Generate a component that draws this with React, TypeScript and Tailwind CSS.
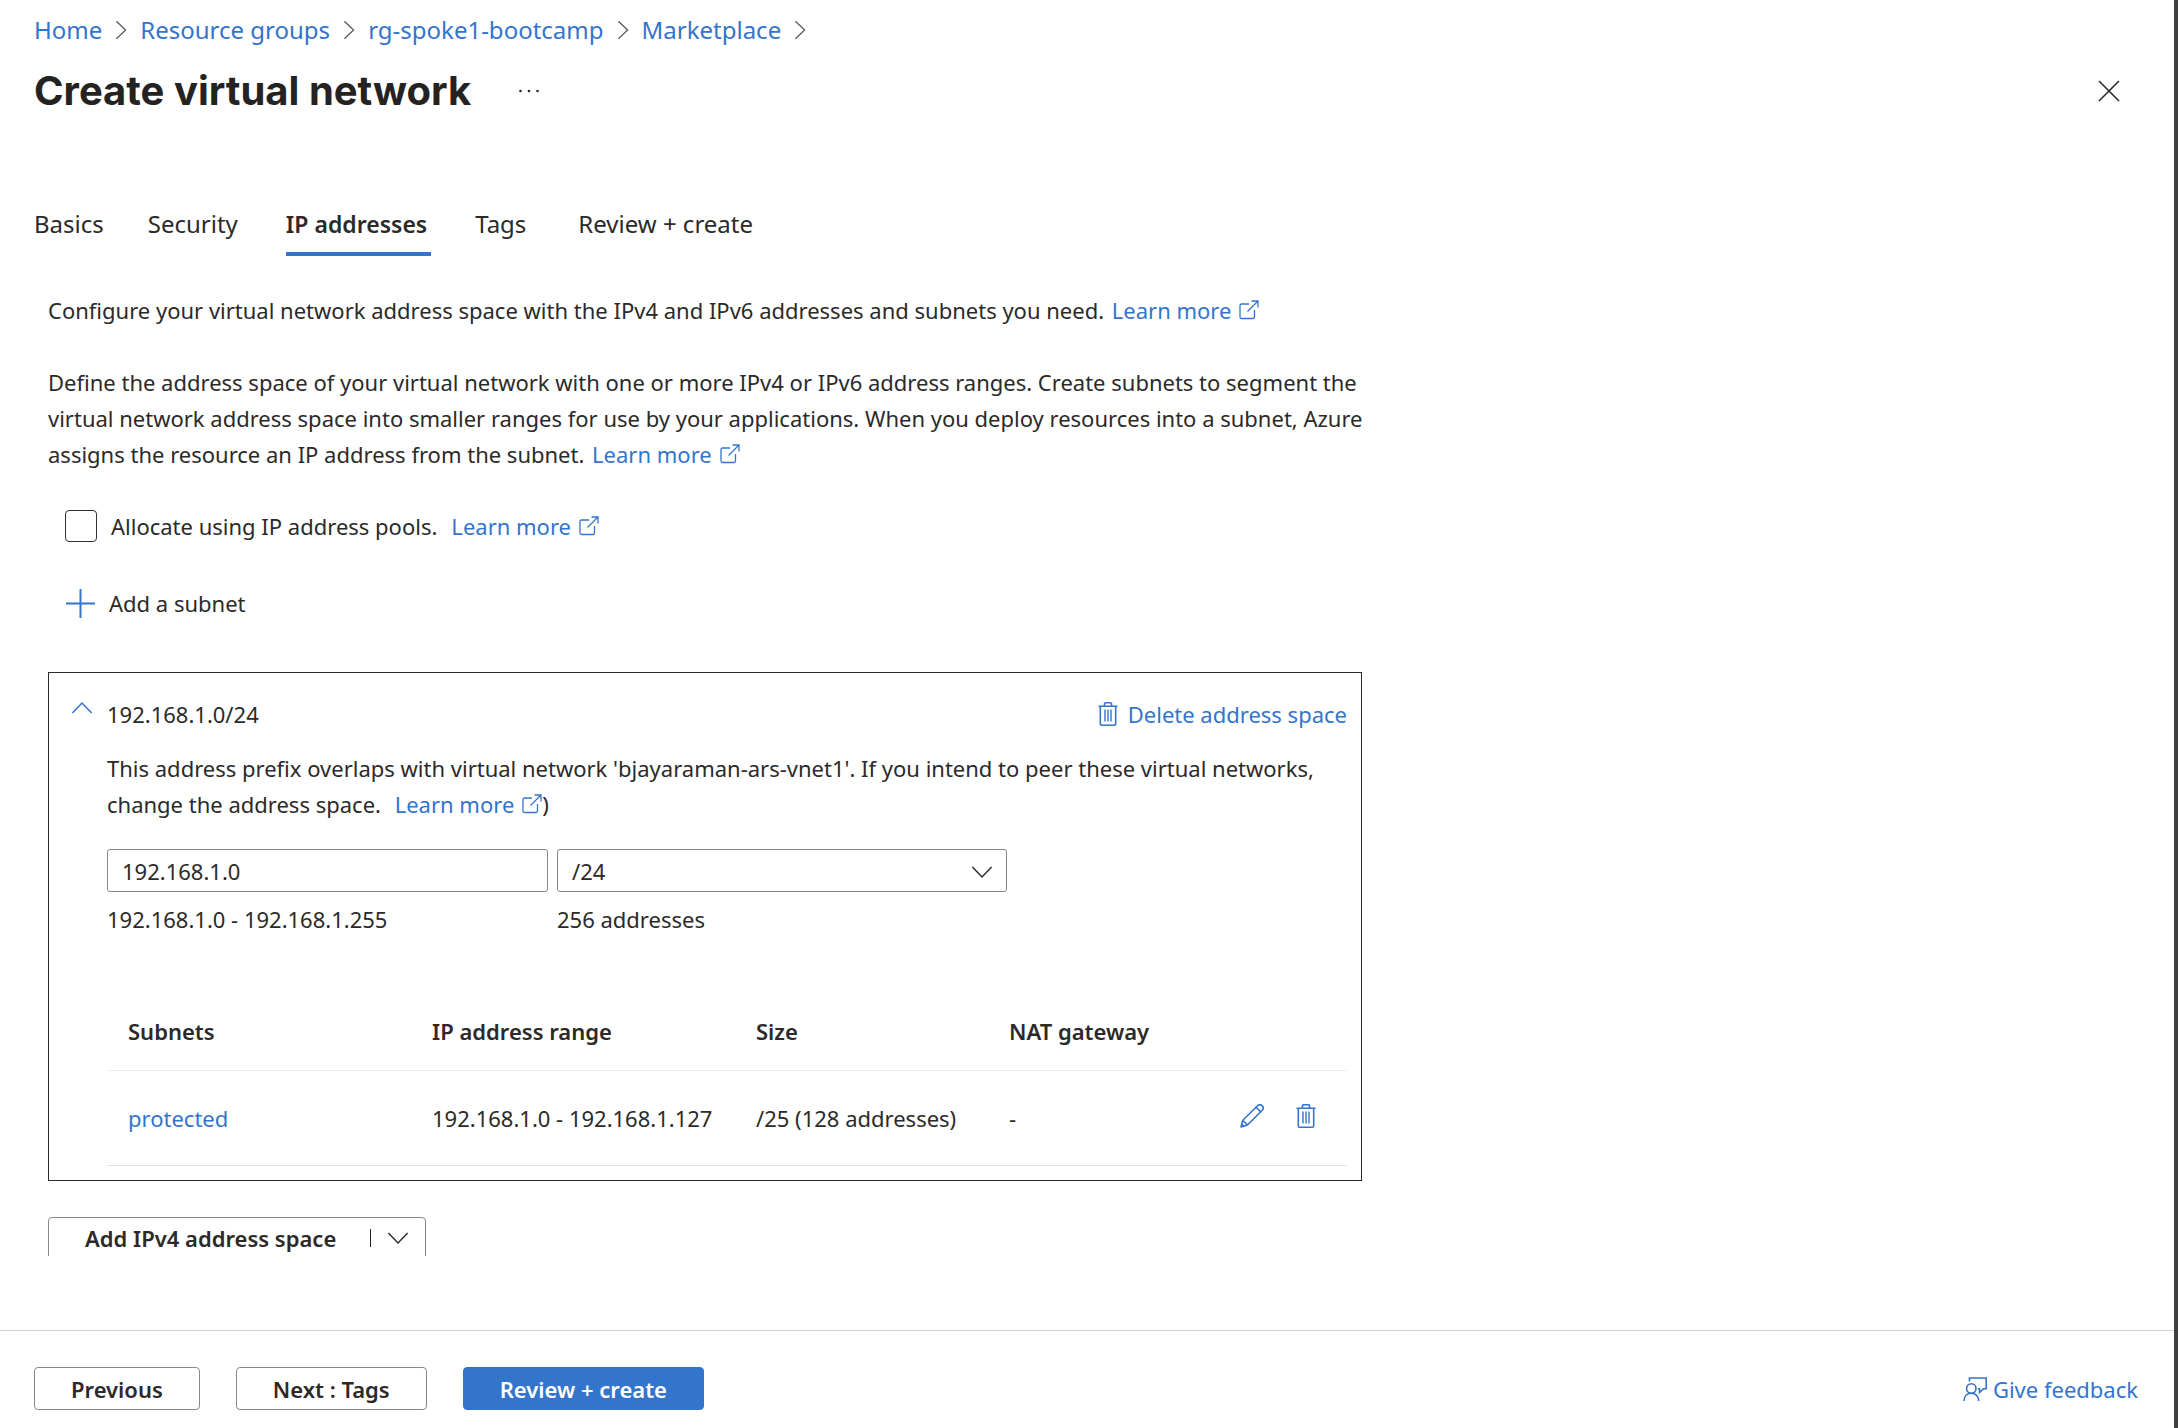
import type { ReactNode } from "react";

type IconProps = { className?: string };

function Chevron({ className = "" }: IconProps) {
  return (
    <svg viewBox="0 0 24 24" fill="none" stroke="currentColor" strokeWidth="1.6" className={className} aria-hidden="true">
      <path d="M1.500 6.500 12 17.500 22.500 6.500" />
    </svg>
  );
}

function ExternalIcon() {
  return (
    <svg viewBox="0 0 20 20" fill="none" stroke="currentColor" strokeWidth="1.3" className="mb-1.5 ml-2 inline-block size-5" aria-hidden="true">
      <path d="M10 4H2.5A1.5 1.5 0 0 0 1 5.500V17a1.500 1.500 0 0 0 1.500 1.500H14a1.500 1.500 0 0 0 1.500-1.500V10" />
      <path d="M12.500 1H19v6.500M19 1 8.500 11.500" />
    </svg>
  );
}

function TrashIcon({ className = "" }: IconProps) {
  return (
    <svg viewBox="0 0 20 24" fill="none" stroke="currentColor" strokeWidth="1.6" className={className} aria-hidden="true">
      <path d="M.5 4.200h19M6.500 4V1.800a1 1 0 0 1 1-1h5a1 1 0 0 1 1 1V4M2.300 4.500V22a1.200 1.200 0 0 0 1.200 1.200h13a1.200 1.200 0 0 0 1.200-1.200V4.500" />
      <path strokeWidth="1.4" d="M7 7.500v12M10 7.500v12M13 7.500v12" />
    </svg>
  );
}

function PencilIcon() {
  return (
    <svg viewBox="0 0 24 24" fill="none" stroke="currentColor" strokeWidth="1.6" strokeLinejoin="round" className="size-6" aria-hidden="true">
      <path d="M1 23 2.800 16.200 17.500 1.800a3 3 0 0 1 4.700 4.500L7.500 21z" />
      <path d="M2.800 16.200 7.500 21M16 3.300 20.700 7.900M1.800 20.200 3.800 22.200" />
    </svg>
  );
}

function FeedbackIcon() {
  return (
    <svg viewBox="0 0 24 24" fill="none" stroke="currentColor" strokeWidth="1.6" className="size-6" aria-hidden="true">
      <circle cx="8.300" cy="11.500" r="4.700" />
      <path d="M1 24c0-4.600 3-7.700 7.300-7.700S15.800 19.400 15.800 24" />
      <path d="M6.500 4.500V1h16.700v10.800h-2.700L16.500 15.500v-3.700h-1.700" />
    </svg>
  );
}

function LearnMore() {
  return (
    <a href="#learn" className="ml-0.5 whitespace-nowrap text-[#3374cd]">
      Learn more
      <ExternalIcon />
    </a>
  );
}

const crumbs = ["Home", "Resource groups", "rg-spoke1-bootcamp", "Marketplace"];

const tabs = [
  { name: "Basics", space: "mr-11" },
  { name: "Security", space: "mr-12" },
  { name: "IP addresses", space: "mr-11", active: true },
  { name: "Tags", space: "mr-13" },
  { name: "Review + create", space: "" },
];

function FooterButton({ children, className }: { children: ReactNode; className: string }) {
  return (
    <button type="button" className={`h-[43px] rounded-[4px] border text-[22px] leading-[30px] font-semibold ${className}`}>
      {children}
    </button>
  );
}

export default function App() {
  return (
    <div className="flex h-screen flex-col border-r-4 border-[#404040] bg-white font-['Noto_Sans','Open_Sans',sans-serif] text-[22px] leading-9 text-[#2b2a29]">
      <header className="px-[34px] pt-3">
        <nav aria-label="Breadcrumb">
          <ol className="flex items-center text-[24px] text-[#3374cd]">
            {crumbs.map((crumb) => (
              <li key={crumb} className="flex items-center">
                <a href="#crumb">{crumb}</a>
                <Chevron className="mx-[9px] size-5 -rotate-90 text-[#605e5c]" />
              </li>
            ))}
          </ol>
        </nav>
        <div className="mt-4 flex items-center">
          <h1 className="font-['Inter',sans-serif] text-[40px] leading-[54px] font-bold text-[#242322]">Create virtual network</h1>
          <button type="button" aria-label="More options" className="ml-12">
            <svg viewBox="0 0 20 4" fill="currentColor" className="h-1 w-5" aria-hidden="true">
              <circle cx="1.500" cy="2" r="1.300" />
              <circle cx="10" cy="2" r="1.300" />
              <circle cx="18.500" cy="2" r="1.300" />
            </svg>
          </button>
          <button type="button" aria-label="Close" className="mr-5 ml-auto">
            <svg viewBox="0 0 22 22" stroke="currentColor" strokeWidth="1.600" className="size-[22px]" aria-hidden="true">
              <path d="M1 1 21 21M21 1 1 21" />
            </svg>
          </button>
        </div>
        <div role="tablist" className="mt-[88px] flex items-start text-[24px]">
          {tabs.map((tab) => (
            <button
              key={tab.name}
              type="button"
              role="tab"
              aria-selected={!!tab.active}
              className={`${tab.space} h-[50px] border-b-4 pb-2.5 ${tab.active ? "border-[#3374cd] pr-1 text-[23px] font-semibold" : "border-transparent"}`}
            >
              {tab.name}
            </button>
          ))}
        </div>
      </header>

      <main className="mb-[74px] min-h-0 flex-1 overflow-hidden px-12 pt-9">
        <div className="max-w-[1314px]">
          <p>
            Configure your virtual network address space with the IPv4 and IPv6 addresses and subnets you need. <LearnMore />
          </p>
          <p className="-mr-6 mt-9">
            Define the address space of your virtual network with one or more IPv4 or IPv6 address ranges. Create subnets to segment the
            virtual network address space into smaller ranges for use by your applications. When you deploy resources into a subnet, Azure
            assigns the resource an IP address from the subnet. <LearnMore />
          </p>
          <div className="mt-9 flex items-center pl-[17px]">
            <input id="pools" type="checkbox" className="size-8 appearance-none rounded-[4px] border border-[#323130]" />
            <label htmlFor="pools" className="mr-3 ml-3.5">
              Allocate using IP address pools.
            </label>
            <LearnMore />
          </div>
          <button type="button" className="mt-[41px] flex items-center pl-[18px]">
            <svg viewBox="0 0 29 29" stroke="#3374cd" strokeWidth="2" className="mr-3.5 size-[29px]" aria-hidden="true">
              <path d="M14.500 0v29M0 14.500h29" />
            </svg>
            Add a subnet
          </button>

          <section className="mt-[51px] border border-[#2b2a29] pr-3.5 pb-3.5 pl-[58px]">
            <div className="-ml-9 flex items-center pt-[23px]">
              <button type="button" aria-label="Collapse address space" className="mr-3.5 pb-3 text-[#3374cd]">
                <Chevron className="size-[22px] rotate-180" />
              </button>
              <h2>192.168.1.0/24</h2>
              <button type="button" className="ml-auto flex items-center text-[#3374cd]">
                <TrashIcon className="mr-2.5 h-6 w-5" />
                Delete address space
              </button>
            </div>
            <p className="mt-[18px]">
              This address prefix overlaps with virtual network 'bjayaraman-ars-vnet1'. If you intend to peer these virtual networks, change
              the address space. <span className="ml-1.5"><LearnMore /></span>)
            </p>
            <div className="mt-[27px] flex gap-[9px]">
              <div className="w-[441px]">
                <input
                  type="text"
                  aria-label="Starting address"
                  defaultValue="192.168.1.0"
                  className="block h-[43px] w-full rounded-[3px] border border-[#8a8886] px-3.5"
                />
                <p className="mt-[9px]">192.168.1.0 - 192.168.1.255</p>
              </div>
              <div className="w-[450px]">
                <div className="relative">
                  <select aria-label="Address space size" className="block h-[43px] w-full appearance-none rounded-[3px] border border-[#8a8886] px-3.5">
                    <option>/24</option>
                  </select>
                  <Chevron className="pointer-events-none absolute top-3 right-3.5 size-[22px]" />
                </div>
                <p className="mt-[9px]">256 addresses</p>
              </div>
            </div>
            <table className="mt-14 w-full table-fixed text-left">
              <colgroup>
                <col className="w-[304px]" />
                <col className="w-[324px]" />
                <col className="w-[253px]" />
                <col />
                <col className="w-[128px]" />
              </colgroup>
              <thead>
                <tr className="h-[77px] border-b border-[#edebe9]">
                  <th className="pl-[21px] font-semibold">Subnets</th>
                  <th className="pl-[21px] font-semibold">IP address range</th>
                  <th className="pl-[21px] font-semibold">Size</th>
                  <th className="pl-[21px] font-semibold">NAT gateway</th>
                  <th aria-label="Actions" />
                </tr>
              </thead>
              <tbody>
                <tr className="h-[95px] border-b border-[#e6e4e2]">
                  <td className="pl-[21px]">
                    <a href="#protected" className="text-[#3374cd]">protected</a>
                  </td>
                  <td className="pl-[21px] whitespace-nowrap">192.168.1.0 - 192.168.1.127</td>
                  <td className="pl-[21px] whitespace-nowrap">/25 (128 addresses)</td>
                  <td className="pl-[21px]">-</td>
                  <td className="pl-[21px] text-[#3374cd]">
                    <div className="flex items-center gap-8 pb-1">
                      <button type="button" aria-label="Edit subnet"><PencilIcon /></button>
                      <button type="button" aria-label="Delete subnet"><TrashIcon className="h-6 w-5" /></button>
                    </div>
                  </td>
                </tr>
              </tbody>
            </table>
          </section>

          <button type="button" className="mt-9 flex h-[43px] items-center rounded-[4px] border border-[#8a8886] pr-4 pl-9 font-semibold">
            Add IPv4 address space
            <span className="ml-[34px] h-[18px] w-px bg-[#201f1e]" />
            <Chevron className="ml-4 size-[22px]" />
          </button>
        </div>
      </main>

      <footer className="flex items-center gap-9 border-t border-[#d2d0ce] pt-9 pr-9 pb-[18px] pl-[34px]">
        <FooterButton className="border-[#8a8886] px-9">Previous</FooterButton>
        <FooterButton className="border-[#8a8886] px-9">Next : Tags</FooterButton>
        <FooterButton className="border-[#3374cd] bg-[#3374cd] px-9 text-white">Review + create</FooterButton>
        <a href="#feedback" className="ml-auto flex items-center gap-1.5 text-[#3374cd]">
          <FeedbackIcon />
          Give feedback
        </a>
      </footer>
    </div>
  );
}
